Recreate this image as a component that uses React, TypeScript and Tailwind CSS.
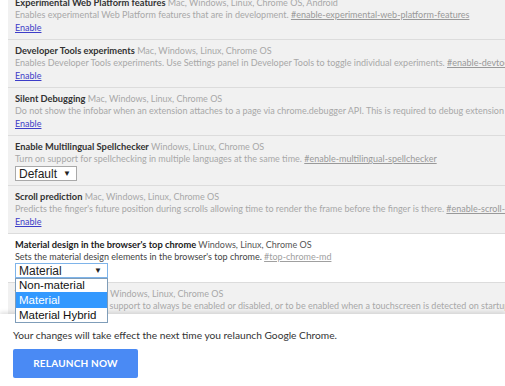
import React from "react";

type Exp = {
  title: string;
  platforms: string;
  desc: string;
  tag: string;
  control: "enable" | "default" | "material";
  enabled?: boolean;
};

const exps: Exp[] = [
  {
    title: "Experimental Web Platform features",
    platforms: "Mac, Windows, Linux, Chrome OS, Android",
    desc: "Enables experimental Web Platform features that are in development.",
    tag: "#enable-experimental-web-platform-features",
    control: "enable",
  },
  {
    title: "Developer Tools experiments",
    platforms: "Mac, Windows, Linux, Chrome OS",
    desc: "Enables Developer Tools experiments. Use Settings panel in Developer Tools to toggle individual experiments.",
    tag: "#enable-devtools-experiments",
    control: "enable",
  },
  {
    title: "Silent Debugging",
    platforms: "Mac, Windows, Linux, Chrome OS",
    desc: "Do not show the infobar when an extension attaches to a page via chrome.debugger API. This is required to debug extension background pages.",
    tag: "#silent-debugger-extension-api",
    control: "enable",
  },
  {
    title: "Enable Multilingual Spellchecker",
    platforms: "Windows, Linux, Chrome OS",
    desc: "Turn on support for spellchecking in multiple languages at the same time.",
    tag: "#enable-multilingual-spellchecker",
    control: "default",
  },
  {
    title: "Scroll prediction",
    platforms: "Mac, Windows, Linux, Chrome OS",
    desc: "Predicts the finger's future position during scrolls allowing time to render the frame before the finger is there.",
    tag: "#enable-scroll-prediction",
    control: "enable",
  },
  {
    title: "Material design in the browser's top chrome",
    platforms: "Windows, Linux, Chrome OS",
    desc: "Sets the material design elements in the browser's top chrome.",
    tag: "#top-chrome-md",
    control: "material",
    enabled: true,
  },
  {
    title: "Touch Events API",
    platforms: "Mac, Windows, Linux, Chrome OS",
    desc: "Force Touch Events API support to always be enabled or disabled, or to be enabled when a touchscreen is detected on startup (Automatic, the default).",
    tag: "#touch-events",
    control: "enable",
  },
];

function Row({ e }: { e: Exp }) {
  const on = !!e.enabled;
  return (
    <div
      className={`relative border-b border-[#dcdcdc] pl-[7px] pt-[5px] pb-[4px] whitespace-nowrap ${
        on ? "bg-white" : "bg-[#f1f1f1]"
      }`}
    >
      <div className="h-[12px] leading-[12px] text-[9px]">
        <span className={`text-[9.3px] font-bold ${on ? "text-[#222]" : "text-[#333]"}`}>{e.title}</span>{" "}
        <span className={on ? "text-[#555]" : "text-[#a8a8a8]"}>{e.platforms}</span>
      </div>
      <div className={`h-[12px] leading-[12px] text-[9px] ${on ? "text-[#444]" : "text-[#a8a8a8]"}`}>
        {e.desc} <span className={`underline ${on ? "text-[#a0a0a0]" : "text-[#999]"}`}>{e.tag}</span>
      </div>
      {e.control === "enable" && (
        <div className="h-[14px] leading-[14px] text-[9px]">
          <span className="text-[#3d3dc8] underline">Enable</span>
        </div>
      )}
      {e.control === "default" && (
        <div className="h-[16px] pt-[1px]">
          <div className="flex h-[15px] w-[62px] items-center justify-between border border-[#a9a9a9] bg-white pl-[3px] pr-[5px] font-['Liberation_Sans',Arial,sans-serif] text-[12px] text-[#222]">
            <span>Default</span>
            <span className="text-[8px]">▼</span>
          </div>
        </div>
      )}
      {e.control === "material" && (
        <div className="h-[15px]">
          <div className="relative flex h-[15px] w-[93px] items-center justify-between border border-[#7eb4ea] bg-white pl-[3px] pr-[5px] font-['Liberation_Sans',Arial,sans-serif] text-[12px] text-[#222]">
            <span>Material</span>
            <span className="text-[8px]">▼</span>
            <div className="absolute left-[-1px] top-[14px] z-20 w-[93px] border border-[#7f9db9] bg-white text-[11.5px] leading-[14px] text-[#111]">
              <div className="h-[13px] pl-[3px] leading-[13px]">Non-material</div>
              <div className="h-[16px] bg-[#3399ff] pl-[3px] leading-[16px] text-white">Material</div>
              <div className="h-[14px] pl-[3px] leading-[14px]">Material Hybrid</div>
            </div>
          </div>
        </div>
      )}
    </div>
  );
}

export default function App() {
  return (
    <div className="relative h-[386px] w-[505px] overflow-hidden bg-white font-['Lato','Noto_Sans',sans-serif]">
      <div className="flex h-[314px] flex-col pl-[8px]">
        <div className="mt-[-8px] w-[700px]">
          {exps.map((e) => (
            <Row key={e.title} e={e} />
          ))}
        </div>
      </div>
      <div className="relative z-10 h-[72px] bg-white pl-[13px] pt-[14px] shadow-[0_-2px_4px_rgba(0,0,0,0.12)]">
        <div className="h-[14px] leading-[14px] text-[10.2px] text-[#333]">
          Your changes will take effect the next time you relaunch Google Chrome.
        </div>
        <div className="mt-[7px] flex h-[29px] w-[125px] items-center justify-center rounded-[2px] bg-[#4a8af4] text-[10px] font-bold tracking-[0.2px] text-white">
          RELAUNCH NOW
        </div>
      </div>
    </div>
  );
}
